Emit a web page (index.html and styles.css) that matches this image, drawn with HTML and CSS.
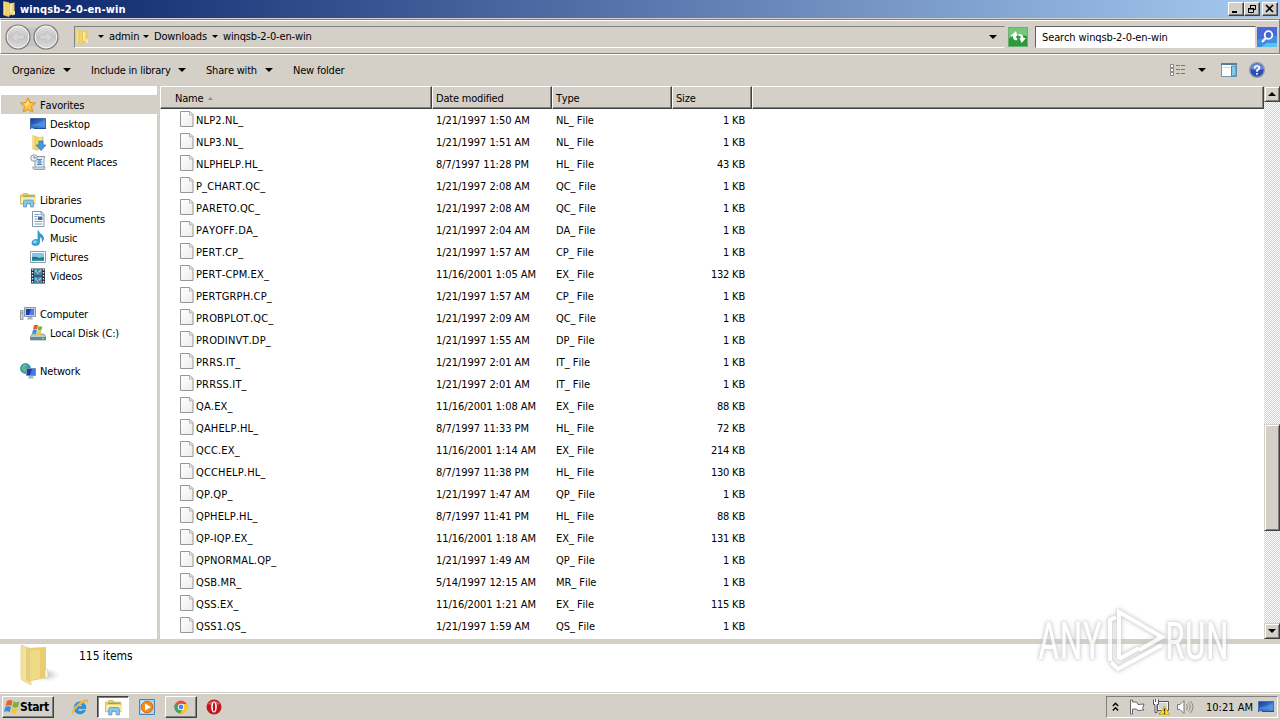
FILE: index.html
```html
<!DOCTYPE html>
<html lang="en">
<head>
  <meta charset="utf-8">
  <title>winqsb-2-0-en-win</title>
  <link rel="stylesheet" href="styles.css">
</head>
<body>
  <!-- shared icons -->
  <svg class="defs" width="0" height="0">
    <defs>
      <linearGradient id="gold" x1="0" x2="1" y1="0" y2="0">
        <stop offset="0" stop-color="#fbeea6"/>
        <stop offset=".5" stop-color="#e9cb5d"/>
        <stop offset="1" stop-color="#f3df85"/>
      </linearGradient>
      <linearGradient id="blue" x1="0" x2="1" y1="0" y2="1">
        <stop offset="0" stop-color="#123a9c"/>
        <stop offset="1" stop-color="#4f9cf0"/>
      </linearGradient>
      <linearGradient id="page" x1="0" x2="1" y1="0" y2="1">
        <stop offset="0" stop-color="#ffffff"/>
        <stop offset="1" stop-color="#ececec"/>
      </linearGradient>
      <symbol id="folder" viewBox="0 0 16 16">
        <path d="M7 2.500L13.500 1.500V13L7 15z" fill="#e8c95e"/>
        <path d="M2.500.500L8 1.500V15.800L2.500 14z" fill="url(#gold)" stroke="#e2c668" stroke-width=".5"/>
        <path d="M9 3h2.500v9H9z" fill="#f8e99b"/>
        <path d="M12.500 9.500l1.500 1v3l-3 1z" fill="#f4e9b8"/>
      </symbol>
      <symbol id="file" viewBox="0 0 14 16">
        <path d="M.5.500h9.500l3 3v12H.5z" fill="url(#page)" stroke="#969696"/>
        <path d="M9.500.5v3.500h3.500" fill="#e0e0e0" stroke="#b5b5b5"/>
      </symbol>
      <symbol id="library" viewBox="0 0 16 16">
        <path d="M.5 3h2l1-1.500h4l1 1.500h6.500v9H.5z" fill="#ecd16b" stroke="#cfaa43" stroke-width=".7"/>
        <path d="M3 4h7" stroke="#58a557" stroke-width="1"/>
        <path d="M10 4h4" stroke="#5c9bd0" stroke-width="1"/>
        <path d="M1 5.500h14V11H1z" fill="#fbeeaa"/>
        <path d="M3.500 15V9.500Q3.500 8 5 8h7q1.500 0 1.500 1.500V15h-3v-3.500h-4V15z" fill="#8ac6ec" stroke="#4a91c7" stroke-width=".7"/>
      </symbol>
      <symbol id="screen" viewBox="0 0 16 16">
        <path d="M.5 2.500h15v9.500H.5z" fill="url(#blue)" stroke="#456aa8"/>
        <path d="M1 9q8-1 14-6v7H1z" fill="#5c9de8" opacity=".55"/>
        <path d="M0 12.500h16" stroke="#2449a0"/>
        <path d="M1 12.500h3" stroke="#7fc8e8"/>
      </symbol>
    </defs>
  </svg>

  <div class="titlebar">
    <svg class="icon" viewBox="0 0 16 16"><use href="#folder"/></svg>
    <span class="title">winqsb-2-0-en-win</span>
    <div class="window-buttons">
      <button class="win-btn"><svg width="12" height="10"><path d="M2 8h5" stroke="#000" stroke-width="2"/></svg></button>
      <button class="win-btn restore"><svg width="12" height="10"><path d="M4.500 4V1.500h5v4H8M4 1.500h6M2 5h6M2.500 4v4.500h5V4M2 4.500h6" fill="none" stroke="#000"/></svg></button>
      <button class="win-btn"><svg width="12" height="10"><path d="M2 1l7 7M9 1L2 8" stroke="#000" stroke-width="1.600"/></svg></button>
    </div>
  </div>

  <div class="navbar">
    <div class="travel">
      <svg width="56" height="28" viewBox="0 0 56 28">
        <defs>
          <linearGradient id="disc" x2="0" y2="1">
            <stop offset="0" stop-color="#e4e4e4"/>
            <stop offset=".5" stop-color="#c4c4c4"/>
            <stop offset="1" stop-color="#dedede"/>
          </linearGradient>
        </defs>
        <path d="M14 2q14 6 28 0v24q-14-6-28 0z" fill="#c6c4c0"/>
        <circle cx="14" cy="14" r="12" fill="url(#disc)" stroke="#77797b" stroke-width="1.200"/>
        <circle cx="42" cy="14" r="12" fill="url(#disc)" stroke="#77797b" stroke-width="1.200"/>
        <circle cx="14" cy="14" r="10.800" fill="none" stroke="#f2f2f2"/>
        <circle cx="42" cy="14" r="10.800" fill="none" stroke="#f2f2f2"/>
        <path d="M7.500 14l6-6v4h6.500v4h-6.500v4z" fill="#d6d6d6" stroke="#c0c0c0" stroke-width=".7"/>
        <path d="M48.500 14l-6-6v4H36v4h6.500v4z" fill="#d6d6d6" stroke="#c0c0c0" stroke-width=".7"/>
      </svg>
    </div>
    <div class="address">
      <svg class="icon" viewBox="0 0 16 16"><use href="#folder"/></svg>
      <i class="caret small first"></i><span class="crumb admin">admin</span>
      <i class="caret small"></i><span class="crumb downloads">Downloads</span>
      <i class="caret small"></i><span class="crumb current">winqsb-2-0-en-win</span>
      <i class="caret address-drop"></i>
    </div>
    <div class="refresh">
      <svg width="20" height="20" viewBox="0 0 20 20">
        <rect x=".5" y=".5" width="19" height="19" fill="#2c9a38" stroke="#6fae74"/>
        <path d="M1 1h18v8Q10 7 1 11z" fill="#74c779"/>
        <path d="M8.500 13.500Q4.500 13 5 9H2.500L8 4l1.500 5H8Q8 11 9.500 12z" fill="#fff"/>
        <path d="M10.500 7q4.500-.5 5 4H18L13.500 16l-2-5h1.500Q13 9 10.500 8.500z" fill="#fff"/>
      </svg>
    </div>
    <div class="search">Search winqsb-2-0-en-win</div>
    <div class="search-go">
      <svg width="20" height="20" viewBox="0 0 20 20">
        <rect width="20" height="20" fill="#3f8ee6"/>
        <path d="M0 0h20v9Q10 8 0 13z" fill="#4a68d6"/>
        <path d="M4 20l6-4h10v4z" fill="#5cc0f4"/>
        <circle cx="11.500" cy="8" r="3.800" fill="#4167d2" stroke="#fff" stroke-width="1.800"/>
        <path d="M9 11L5 15" stroke="#fff" stroke-width="2.200"/>
      </svg>
    </div>
  </div>

  <div class="toolbar">
    <span class="tool organize">Organize</span><i class="caret"></i>
    <span class="tool include">Include in library</span><i class="caret"></i>
    <span class="tool share">Share with</span><i class="caret"></i>
    <span class="tool new-folder">New folder</span>
    <div class="view-tools">
      <svg width="16" height="14" viewBox="0 0 16 14">
        <path d="M.5 1.500h3v3h-3zM.5 5.500h3v3h-3zM.5 9.500h3v3h-3z" fill="#fff" stroke="#858585"/>
        <path d="M6 2.500h4M11 2.500h4M6 6.500h4M11 6.500h4M6 10.500h4M11 10.500h4" stroke="#66788d"/>
      </svg>
      <i class="caret"></i>
      <svg class="preview" width="16" height="14" viewBox="0 0 16 14">
        <path d="M.5.500h15v13H.5z" fill="#fff" stroke="#6d94aa"/>
        <path d="M0 1h16" stroke="#547e99" stroke-width="2"/>
        <path d="M2 4.500h7" stroke="#c4d3dc"/>
        <path d="M10.500 3h4.500v10h-4.500z" fill="#83c9ef" stroke="#4c87a9"/>
      </svg>
      <svg width="16" height="16" viewBox="0 0 16 16">
        <circle cx="8" cy="8" r="7.300" fill="#2c4db8" stroke="#8d99b5" stroke-width="1.400"/>
        <path d="M2 7a6 5 0 0 1 12 0q-6 2-12 0" fill="#7390df"/>
        <path d="M5.700 6.200Q5.700 4 8 4t2.300 2Q10.300 7.200 8 8.500V9.700M8 11v1.800" fill="none" stroke="#fff" stroke-width="1.700"/>
      </svg>
    </div>
  </div>

  <div class="main">
    <div class="sidebar">
      <div class="group">
        <div class="side-item selected">
          <svg class="icon" viewBox="0 0 16 16"><path d="M8 .8l2.200 4.700 5.300.6-4 3.500 1.200 5.400L8 12.300 3.300 15l1.200-5.400-4-3.500 5.300-.6z" fill="#fbc63c" stroke="#e58b1e"/><path d="M8 3l1 4-4 3 1-3.500L3 6.800l3.500-.3z" fill="#ffeb94"/></svg>
          <span>Favorites</span>
        </div>
        <div class="side-item sub"><svg class="icon" viewBox="0 0 16 16"><use href="#screen"/></svg><span>Desktop</span></div>
        <div class="side-item sub">
          <svg class="icon" viewBox="0 0 16 16"><use href="#folder"/><path d="M9 6h4v4h3l-5 5.500L6 10h3z" fill="#429be0" stroke="#2871b8" stroke-width=".7"/></svg>
          <span>Downloads</span>
        </div>
        <div class="side-item sub">
          <svg class="icon" viewBox="0 0 16 16"><path d="M5 2.500h10q-1 1-1 3v8q0 2-2 2H5z" fill="#e3ebf2" stroke="#8b9aa8"/><path d="M7 5.500h5M7 8h5M7 10.500h5" stroke="#6588aa"/><path d="M8 6h3v4H8z" fill="#77a9d5"/><circle cx="4" cy="4" r="3.300" fill="#edf3f7" stroke="#879aac"/><path d="M4 2v2h2" fill="none" stroke="#4d6278" stroke-width=".8"/><path d="M2.500 13H15v2.500H4.500q-2 0-2-2.500z" fill="#c9d4dd" stroke="#8b9aa8" stroke-width=".7"/></svg>
          <span>Recent Places</span>
        </div>
      </div>
      <div class="group">
        <div class="side-item"><svg class="icon" viewBox="0 0 16 16"><use href="#library"/></svg><span>Libraries</span></div>
        <div class="side-item sub">
          <svg class="icon" viewBox="0 0 16 16"><path d="M2.500.500h9l2.500 3v12H2.500z" fill="#fff" stroke="#8297ad"/><path d="M11 .5V4h3" fill="#dce6ef" stroke="#8297ad"/><path d="M4.500 3.500h5M4.500 5.500h3M4.500 8h3M4.500 10.500h8M4.500 13h8" stroke="#7c9cbd"/><path d="M8 5.500h4.500V9H8z" fill="#356da5"/></svg>
          <span>Documents</span>
        </div>
        <div class="side-item sub">
          <svg class="icon" viewBox="0 0 16 16"><path d="M8 .5q1 3 4 4.500 3 3 .5 6.500.5-3.500-3-5v6q0 3-4 3T2 12.500 5.500 9.500q1.500-.2 2.500.3z" fill="#36a1df" stroke="#1c74b8" stroke-width=".6"/><ellipse cx="5" cy="12" rx="2" ry="1.400" fill="#8fd4f7"/></svg>
          <span>Music</span>
        </div>
        <div class="side-item sub">
          <svg class="icon" viewBox="0 0 16 16"><path d="M.5 2.500h15v11H.5z" fill="#fff" stroke="#8ba0ae"/><path d="M2 4h12v8H2z" fill="#84c7ed"/><path d="M2 8q4-1 7 1l5-1v4H2z" fill="#28746d"/><path d="M2 10.500h12V12H2z" fill="#3698b6"/></svg>
          <span>Pictures</span>
        </div>
        <div class="side-item sub">
          <svg class="icon" viewBox="0 0 16 16"><path d="M1 .5h14v15H1z" fill="#26303d"/><path d="M4 1h8v6.500H4zM4 8.500h8V15H4z" fill="#3c8bb7"/><path d="M5 2l3 3 3-3M5 10l3 3 3-3" fill="none" stroke="#92cedd" stroke-width="1.500"/><path d="M7 3l3 3M7 11l3 3" stroke="#a4584f"/><path d="M2.500 1v14M13.500 1v14" stroke="#e8edf0" stroke-width="1.400" stroke-dasharray="1.500 1.500"/></svg>
          <span>Videos</span>
        </div>
      </div>
      <div class="group">
        <div class="side-item">
          <svg class="icon" viewBox="0 0 16 16"><path d="M.5 4.500h2.500v9H.5z" fill="#d5dce0" stroke="#8b979e"/><path d="M1 7h2" stroke="#62b45a"/><path d="M4.500 1.500h11v9h-11z" fill="#c8cfd6" stroke="#8c97a4"/><path d="M6 3h8v6H6z" fill="#183db5"/><path d="M11 3h3v6H9z" fill="#4d7ceb"/><path d="M8 11h4l1 2.500H7z" fill="#a9b2bb"/></svg>
          <span>Computer</span>
        </div>
        <div class="side-item sub">
          <svg class="icon" viewBox="0 0 16 16"><path d="M2 9h12l2 3v3H.5v-3z" fill="#c1cbd0" stroke="#718993" stroke-width=".7"/><path d="M.5 12H16v3H.5z" fill="#568d9f"/><path d="M12 13.500h2" stroke="#8ff16e"/><path d="M4 .5q2-1.500 4 0L7 4.500Q5 3.500 3 4.500z" fill="#ea562b"/><path d="M8.500 1q2 1 4 0l-1 4q-2 1-4 0z" fill="#77b53b"/><path d="M3 5q2-1 4 0L6 9q-2-1-4 0z" fill="#398bdc"/><path d="M7.500 5.500q2 1 4 0l-1 4q-2 1-4 0z" fill="#f7c72d"/></svg>
          <span>Local Disk (C:)</span>
        </div>
      </div>
      <div class="group">
        <div class="side-item">
          <svg class="icon" viewBox="0 0 16 16"><circle cx="5.500" cy="5.500" r="5" fill="#369bd1" stroke="#217fa9" stroke-width=".7"/><path d="M2 3q3-3 5-1L5 5l2 2-3 2-2-3z" fill="#68bd6a"/><path d="M6.500 5.500h9v7h-9z" fill="#173bb0" stroke="#7c8fab"/><path d="M12 6h3v6h-5z" fill="#4278e4"/><path d="M9 13h4l1 2.500H8z" fill="#a6b5bf"/></svg>
          <span>Network</span>
        </div>
      </div>
    </div>

    <div class="files">
      <div class="file-head">
        <div class="col col-name">Name <svg class="sort" width="5" height="3"><path d="M0 3l2.500-3L5 3z" fill="#8f8c86"/></svg></div>
        <div class="col col-date">Date modified</div>
        <div class="col col-type">Type</div>
        <div class="col col-size">Size</div>
        <div class="col col-rest"></div>
      </div>
      <div id="file-list"></div>
    </div>

    <div class="scrollbar">
      <div class="scroll-btn"><i class="arrow-up"></i></div>
      <div class="scroll-space-top"></div>
      <div class="scroll-thumb"></div>
      <div class="scroll-space"></div>
      <div class="scroll-btn"><i class="caret"></i></div>
    </div>
  </div>

  <div class="details">
    <svg class="big-folder" width="42" height="44" viewBox="0 0 42 44">
      <defs><radialGradient id="shade"><stop offset="0" stop-color="#8ca0a8" stop-opacity=".6"/><stop offset="1" stop-color="#b8c5ca" stop-opacity="0"/></radialGradient></defs>
      <ellipse cx="28" cy="31" rx="13" ry="7" fill="url(#shade)"/>
      <path d="M9 4l18-1v31l-15 3z" fill="#e9cd70"/>
      <path d="M12 6h9v28l-9 3z" fill="#efda85"/>
      <path d="M2 1l8 3q2 1 2 3v34L3 36q-1-1-1-3z" fill="#f3e09a" stroke="#e6cf84" stroke-width=".7"/>
      <path d="M7 3l4 2v33l-4-2z" fill="#e6cd78"/>
      <path d="M26 28q0-3 1.500-3t1.500 3v5l-3 1z" fill="#faf6d9" stroke="#ddcd86" stroke-width=".7"/>
    </svg>
    <span class="count">115 items</span>
  </div>

  <div class="taskbar">
    <button class="start">
      <svg width="16" height="16" viewBox="0 0 16 16"><path d="M3 2q3-2 5.500 0L7.300 7Q4.500 5.500 1.500 7z" fill="#ed6128"/><path d="M9.500 2.500q3 1.500 6 0L14 8q-3 1.500-5.700 0z" fill="#75b642"/><path d="M1.300 8q3-1.500 5.700 0l-1.200 5q-3-1.500-5.800 0z" fill="#358fda"/><path d="M8 9q3 1.500 5.700 0l-1.400 5q-3 1.500-5.500 0z" fill="#f7c638"/></svg>
      <span>Start</span>
    </button>
    <div class="task ie">
      <svg width="18" height="18" viewBox="0 0 18 18"><path d="M14.500 12.500Q12.500 16 9 16q-5.500-.3-5.800-6Q3.500 4 9 3.800q5.800.3 6 7H6.500Q7 13.500 9 13.500q1.500 0 2.300-1zM6.500 8.500h5Q11 6.300 9 6.300T6.500 8.500z" fill="#2494df" stroke="#1676bf" stroke-width=".5" fill-rule="evenodd"/><path d="M2 16.500Q-1 14 5 7.500 14-.5 16.500 1.500q1.500 1-.5 4.500.5-3-3-1.500Q8 7 4 12q-2 3-2 4.500z" fill="#eab93d"/></svg>
    </div>
    <div class="task active"><svg width="17" height="17" viewBox="0 0 16 16"><use href="#library"/></svg></div>
    <div class="task wmp">
      <svg width="16" height="16" viewBox="0 0 16 16"><path d="M.5.500h15v15H.5z" fill="#a9d3f1" stroke="#4686b7"/><path d="M2 2h8v12H2z" fill="#d6eaf8"/><circle cx="8" cy="8" r="5.800" fill="#f08b20" stroke="#d76b09"/><path d="M6 4.500v7L12 8z" fill="#fff"/></svg>
    </div>
    <div class="task raised">
      <svg width="14" height="14" viewBox="0 0 14 14"><circle cx="7" cy="7" r="6.500" fill="#eb4d3d"/><path d="M7 7L1.300 3.500A6.500 6.500 0 0 0 6 13.400L9.500 8.500z" fill="#43a45b"/><path d="M7 4h6a6.500 6.500 0 0 1-7 9.400L9.500 8z" fill="#fbc72f"/><circle cx="7" cy="7" r="3.200" fill="#fff"/><circle cx="7" cy="7" r="2.400" fill="#4688ec"/></svg>
    </div>
    <div class="task opera">
      <svg width="16" height="16" viewBox="0 0 16 16"><circle cx="8" cy="8" r="7.500" fill="#c01820"/><path d="M2 5a7 6 0 0 1 12 0q-6 2-12 0" fill="#e0585c"/><ellipse cx="8" cy="8" rx="2.800" ry="5.500" fill="#fff"/><ellipse cx="8" cy="8" rx="1.200" ry="4.500" fill="#b7151d"/></svg>
    </div>

    <div class="tray">
      <svg class="chevrons" width="7" height="10" viewBox="0 0 7 10"><path d="M.8 4l2.700-2.700L6.200 4M.8 8.500l2.700-2.700 2.700 2.700" fill="none" stroke="#000" stroke-width="1.400"/></svg>
      <svg class="flag" width="16" height="16" viewBox="0 0 16 16"><path d="M1.500 1v14h2v-5h4l1 1.500 6.500-.5q-2-1-1-3l1-3-6 .5-1.500-2.500h-4V1z" fill="#fff" stroke="#686868"/></svg>
      <svg class="net" width="17" height="17" viewBox="0 0 17 17"><path d="M4.500 2.500h11v9h-11z" fill="#f5f5f5" stroke="#555"/><path d="M6 4h8v6H6z" fill="#d0d3d5"/><path d="M.5.500v5H2v8h2v-8h1.500v-5M2.500 0v3" fill="#fff" stroke="#555"/><path d="M6 14.500h3" stroke="#555"/><path d="M11.500 7L16.500 15.500H6.500z" fill="#fadc27" stroke="#bd9d18" stroke-width=".7"/><path d="M11.500 9.500v3M11.500 13.500V15" stroke="#222" stroke-width="1.300"/></svg>
      <svg class="sound" width="17" height="14" viewBox="0 0 17 14"><path d="M.5 4.500H3l4-4v13l-4-4H.5z" fill="#fff" stroke="#777"/><path d="M9.500 4q2 3 0 6M11.500 2.500q3.500 4.500 0 9M13.500 1q5 6 0 12" fill="none" stroke="#8b8b8b"/></svg>
      <span class="clock">10:21 AM</span>
      <svg class="show-desktop" width="16" height="16" viewBox="0 0 16 16"><use href="#screen"/></svg>
    </div>
  </div>

  <div class="watermark">
    <span class="mark-text any">ANY</span>
    <svg width="60" height="72" viewBox="0 0 60 72">
      <path d="M13 56V9l43 25-23 13M13 56l20-11M4 58V17l6-3M5 59l7 7 44-24"/>
    </svg>
    <span class="mark-text run">RUN</span>
  </div>

  <script>
    const files = [
      ['NLP2.NL_', '1/21/1997 1:50 AM', 1],
      ['NLP3.NL_', '1/21/1997 1:51 AM', 1],
      ['NLPHELP.HL_', '8/7/1997 11:28 PM', 43],
      ['P_CHART.QC_', '1/21/1997 2:08 AM', 1],
      ['PARETO.QC_', '1/21/1997 2:08 AM', 1],
      ['PAYOFF.DA_', '1/21/1997 2:04 AM', 1],
      ['PERT.CP_', '1/21/1997 1:57 AM', 1],
      ['PERT-CPM.EX_', '11/16/2001 1:05 AM', 132],
      ['PERTGRPH.CP_', '1/21/1997 1:57 AM', 1],
      ['PROBPLOT.QC_', '1/21/1997 2:09 AM', 1],
      ['PRODINVT.DP_', '1/21/1997 1:55 AM', 1],
      ['PRRS.IT_', '1/21/1997 2:01 AM', 1],
      ['PRRSS.IT_', '1/21/1997 2:01 AM', 1],
      ['QA.EX_', '11/16/2001 1:08 AM', 88],
      ['QAHELP.HL_', '8/7/1997 11:33 PM', 72],
      ['QCC.EX_', '11/16/2001 1:14 AM', 214],
      ['QCCHELP.HL_', '8/7/1997 11:38 PM', 130],
      ['QP.QP_', '1/21/1997 1:47 AM', 1],
      ['QPHELP.HL_', '8/7/1997 11:41 PM', 88],
      ['QP-IQP.EX_', '11/16/2001 1:18 AM', 131],
      ['QPNORMAL.QP_', '1/21/1997 1:49 AM', 1],
      ['QSB.MR_', '5/14/1997 12:15 AM', 1],
      ['QSS.EX_', '11/16/2001 1:21 AM', 115],
      ['QSS1.QS_', '1/21/1997 1:59 AM', 1]
    ];

    const list = document.getElementById('file-list');

    files.forEach(function(file) {
      const row = document.createElement('div');
      row.className = 'file-row';
      row.innerHTML =
        '<div class="cell-name"><svg width="14" height="16"><use href="#file"/></svg><span>' + file[0] + '</span></div>' +
        '<div class="cell-date">' + file[1] + '</div>' +
        '<div class="cell-type">' + file[0].split('.')[1] + ' File</div>' +
        '<div class="cell-size">' + file[2] + ' KB</div>';
      list.appendChild(row);
    });
  </script>
</body>
</html>
```
FILE: styles.css
```css
* {
  box-sizing: border-box;
}

html, body {
  height: 100%;
  margin: 0;
  padding: 0;
}

body {
  display: flex;
  flex-direction: column;
  overflow: hidden;
  background-color: #d4d0c8;
  font-family: "DejaVu Sans Condensed", "DejaVu Sans", sans-serif;
  font-stretch: condensed;
  font-size: 11px;
  font-kerning: none;
  letter-spacing: -0.2px;
  color: #000;
  white-space: nowrap;
}

svg {
  display: block;
  flex: none;
}

.defs {
  position: absolute;
}

.icon {
  width: 16px;
  height: 16px;
}

.caret {
  flex: none;
  width: 0;
  height: 0;
  border: 4px solid transparent;
  border-top-color: #000;
  border-bottom: 0;
}

.caret.small {
  border-width: 3px;
  border-bottom: 0;
}

/* title bar */
.titlebar {
  display: flex;
  align-items: center;
  height: 18px;
  flex: none;
  padding: 0 2px 0 1px;
  color: #fff;
  font-weight: bold;
  background: linear-gradient(to right, #0a246a, #a6caf0);
}

.title {
  margin-left: 3px;
  letter-spacing: 0.15px;
}

.window-buttons {
  display: flex;
  margin-left: auto;
}

.win-btn {
  width: 16px;
  height: 14px;
  padding: 0 0 0 1px;
  border: 1px solid;
  border-color: #fff #404040 #404040 #fff;
  background-color: #d4d0c8;
  box-shadow: inset -1px -1px #808080;
}

.win-btn.restore {
  margin-right: 2px;
}

/* address row */
.navbar {
  display: flex;
  align-items: center;
  flex: none;
  height: 35px;
  margin-top: 1px;
  padding: 0 1px 0 3px;
  border: 1px solid;
  border-color: #808080 #808080 #808080 #fff;
  box-shadow: inset 0 1px #fff;
}

.travel {
  width: 70px;
}

.address {
  display: flex;
  align-items: center;
  width: 931px;
  height: 22px;
  border: 1px solid;
  border-color: #808080 #d4d0c8 #fff #808080;
}

.address > .icon {
  margin-left: -1px;
}

.caret.first {
  margin-left: 8px;
}

.crumb {
  margin: 0 5px;
  letter-spacing: -0.15px;
}

.crumb.admin {
  width: 29px;
}

.crumb.downloads {
  width: 53px;
}

.address-drop {
  margin-left: auto;
  margin-right: 7px;
}

.refresh {
  margin-left: 3px;
}

.search {
  width: 221px;
  height: 22px;
  margin-left: 7px;
  padding: 0 6px;
  line-height: 21px;
  border: 1px solid;
  border-color: #606060 #d4d0c8 #fff #606060;
  background-color: #fff;
  letter-spacing: -0.12px;
}

.search-go {
  margin-left: 1px;
}

/* command bar */
.toolbar {
  display: flex;
  align-items: center;
  flex: none;
  height: 32px;
  padding: 0 0 1px 12px;
  border-top: 1px solid #fff;
}

.organize {
  width: 51px;
}

.include {
  width: 87px;
}

.share {
  width: 59px;
}

.toolbar > .caret {
  margin-right: 20px;
}

.view-tools {
  display: flex;
  align-items: center;
  margin-left: auto;
  padding-right: 15px;
}

.view-tools .caret {
  margin-left: 12px;
}

.preview {
  margin: 0 12px 0 15px;
}

/* folder tree and file list */
.main {
  display: flex;
  flex: none;
  height: 553px;
}

.sidebar {
  width: 160px;
  padding-top: 9px;
  border-right: 3px solid #d4d0c8;
  background-color: #fff;
}

.group {
  margin-bottom: 19px;
}

.side-item {
  display: flex;
  align-items: center;
  height: 19px;
  margin-left: 1px;
  padding-left: 19px;
}

.side-item span {
  margin-left: 4px;
  padding-top: 2px;
  letter-spacing: -0.15px;
}

.side-item.sub {
  padding-left: 29px;
}

.selected {
  background-color: #d4d0c8;
}

.files {
  width: 1104px;
  background-color: #fff;
}

.file-head {
  display: flex;
  height: 23px;
}

.col {
  display: flex;
  align-items: center;
  width: 120px;
  padding: 1px 0 0 3px;
  border: 1px solid;
  border-color: #fff #404040 #404040 #fff;
  background-color: #d4d0c8;
  box-shadow: inset -1px -1px #808080;
}

.col-name {
  width: 272px;
  padding-left: 14px;
}

.col-size {
  width: 80px;
}

.col-rest {
  flex: 1;
}

.sort {
  margin-left: 5px;
}

.file-row {
  display: flex;
  align-items: center;
  height: 22px;
}

.cell-name {
  display: flex;
  align-items: center;
  width: 276px;
  padding-left: 20px;
  letter-spacing: 0.15px;
}

.cell-name svg {
  margin-bottom: 2px;
}

.cell-name span {
  margin-left: 2px;
}

.cell-date,
.cell-type {
  width: 120px;
  letter-spacing: -0.05px;
}

.cell-size {
  width: 69px;
  text-align: right;
}

.scrollbar {
  display: flex;
  flex-direction: column;
  width: 16px;
  background: repeating-conic-gradient(#d4d0c8 0 25%, #fff 0 50%) 0 0 / 2px 2px;
}

.scroll-btn,
.scroll-thumb {
  border: 1px solid;
  border-color: #d4d0c8 #404040 #404040 #d4d0c8;
  background-color: #d4d0c8;
  box-shadow: inset 1px 1px #fff, inset -1px -1px #808080;
}

.scroll-btn {
  display: flex;
  align-items: center;
  justify-content: center;
  height: 16px;
}

.arrow-up {
  border: 4px solid transparent;
  border-bottom-color: #000;
  border-top: 0;
}

.scroll-space-top {
  height: 322px;
}

.scroll-thumb {
  height: 107px;
}

.scroll-space {
  flex: 1;
}

/* details pane */
.details {
  display: flex;
  flex: none;
  height: 53px;
  padding-left: 19px;
  border-top: 5px solid #d4d0c8;
  background-color: #fff;
}

.count {
  margin: 5px 0 0 18px;
  font-size: 12px;
  letter-spacing: -0.05px;
}

/* taskbar */
.taskbar {
  display: flex;
  flex: 1;
  align-items: center;
  padding: 1px 2px 0;
  border-top: 1px solid #d4d0c8;
  box-shadow: inset 0 1px #fff;
}

.start {
  display: flex;
  align-items: center;
  width: 52px;
  height: 22px;
  padding: 0 1px;
  border: 1px solid;
  border-color: #fff #404040 #404040 #fff;
  background-color: #d4d0c8;
  box-shadow: inset -1px -1px #808080;
  font-family: inherit;
  font-stretch: condensed;
  font-size: 12px;
  font-weight: bold;
  letter-spacing: -0.4px;
}

.task {
  display: flex;
  align-items: center;
  justify-content: center;
  width: 32px;
  height: 22px;
  border: 1px solid transparent;
}

.ie {
  margin-left: 10px;
}

.active {
  margin-left: 1px;
  border-color: #404040 #fff #fff #404040;
  background-color: #fff;
  box-shadow: inset 1px 1px #808080;
}

.wmp {
  margin-left: 2px;
}

.raised {
  margin-left: 2px;
  border-color: #fff #404040 #404040 #fff;
  box-shadow: inset -1px -1px #808080;
}

.opera {
  margin-left: 1px;
}

.tray {
  display: flex;
  align-items: center;
  width: 172px;
  height: 22px;
  margin-left: auto;
  padding-left: 5px;
  border: 1px solid;
  border-color: #808080 #fff #fff #808080;
}

.flag {
  margin-left: 10px;
}

.net {
  margin-left: 8px;
}

.sound {
  margin-left: 7px;
}

.clock {
  width: 46px;
  margin-left: 12px;
  letter-spacing: 0;
}

.show-desktop {
  margin-left: 6px;
}

/* watermark over the window */
.watermark {
  position: absolute;
  left: 1038px;
  top: 602px;
  display: flex;
  align-items: center;
  height: 76px;
  color: #fff;
  font-family: Roboto, sans-serif;
  font-size: 51px;
  letter-spacing: 0;
  opacity: 0.8;
  filter: drop-shadow(0 0 1px #ccc) drop-shadow(0 0 2px #bbb);
}

.watermark svg {
  margin: -2px 3px 0 1px;
}

.watermark path {
  fill: none;
  stroke: #fff;
  stroke-width: 4;
}

.mark-text {
  width: 67px;
  padding-top: 2px;
  transform: scaleX(0.73);
  transform-origin: left;
}

.mark-text.run {
  margin-left: -4px;
}
```
